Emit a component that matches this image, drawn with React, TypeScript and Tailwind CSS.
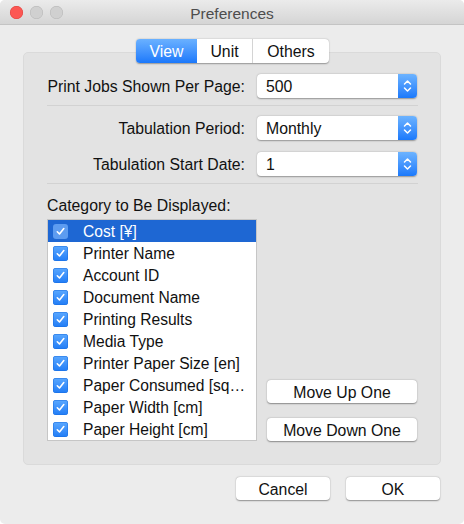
import React from "react";

const font = { fontFamily: '"Liberation Sans", Arial, sans-serif' };

function Check({ selected }: { selected?: boolean }) {
  return (
    <div
      className={
        "flex h-[15px] w-[15px] items-center justify-center rounded-[3px] " +
        (selected
          ? "bg-[#5d9cf0]"
          : "bg-gradient-to-b from-[#5aa8ff] to-[#1f7cf6] shadow-[inset_0_0_0_0.5px_#1a6fe0]")
      }
    >
      <svg width="11" height="11" viewBox="0 0 11 11" fill="none">
        <path d="M2.3 5.8 L4.5 8 L8.8 2.6" stroke="white" strokeWidth="1.6" strokeLinecap="round" strokeLinejoin="round" />
      </svg>
    </div>
  );
}

function Popup({ value }: { value: string }) {
  return (
    <div className="flex h-[24px] w-[160px] overflow-hidden rounded-[4px] bg-white shadow-[0_0.5px_1.5px_rgba(0,0,0,0.35)]">
      <div className="flex flex-1 items-center pl-[9px] pt-[2px] text-[15.8px] text-[#111]">{value}</div>
      <div className="flex w-[19px] items-center justify-center bg-gradient-to-b from-[#6cb3ff] to-[#1a79fb]">
        <svg width="9" height="14" viewBox="0 0 9 14" fill="none">
          <path d="M1.5 5 L4.5 2 L7.5 5" stroke="white" strokeWidth="1.5" strokeLinecap="round" strokeLinejoin="round" />
          <path d="M1.5 9 L4.5 12 L7.5 9" stroke="white" strokeWidth="1.5" strokeLinecap="round" strokeLinejoin="round" />
        </svg>
      </div>
    </div>
  );
}

function Button({ label, w }: { label: string; w: string }) {
  return (
    <div
      className={
        "flex h-[23px] items-center justify-center rounded-[4px] bg-white pt-[2px] text-[15.8px] text-[#111] shadow-[0_0.5px_1.5px_rgba(0,0,0,0.4)] " +
        w
      }
    >
      {label}
    </div>
  );
}

function Row({ label, value, mt }: { label: string; value: string; mt: string }) {
  return (
    <div className={"flex h-[24px] items-center " + mt}>
      <div className="flex h-[24px] w-[198px] items-center justify-end whitespace-nowrap pt-[2px] text-[15.8px]">{label}</div>
      <div className="ml-[12px]">
        <Popup value={value} />
      </div>
    </div>
  );
}

const items = [
  "Cost [¥]",
  "Printer Name",
  "Account ID",
  "Document Name",
  "Printing Results",
  "Media Type",
  "Printer Paper Size [en]",
  "Paper Consumed [sq…",
  "Paper Width [cm]",
  "Paper Height [cm]",
];

export default function App() {
  return (
    <div style={font} className="h-[524px] w-[464px] overflow-hidden rounded-[5px] bg-[#ececec] text-[#111]">
      {/* Title bar */}
      <div className="relative flex h-[25px] items-center border-b border-[#c4c4c4] bg-gradient-to-b from-[#ebebeb] to-[#d5d5d5]">
        <div className="flex gap-[7px] pl-[10px]">
          <div className="h-[13px] w-[13px] rounded-full bg-[#fc5753] shadow-[inset_0_0_0_0.5px_#de3e3a]" />
          <div className="h-[13px] w-[13px] rounded-full bg-[#d0d0d0] shadow-[inset_0_0_0_0.5px_#b6b6b6]" />
          <div className="h-[13px] w-[13px] rounded-full bg-[#d0d0d0] shadow-[inset_0_0_0_0.5px_#b6b6b6]" />
        </div>
        <div className="absolute inset-x-0 top-0 flex h-[25px] items-center justify-center pt-[2px] text-[15.5px] text-[#4d4d4d]">
          Preferences
        </div>
      </div>

      {/* Tabs */}
      <div className="relative z-10 mt-[14px] flex justify-center">
        <div className="ml-[1px] flex h-[24px] overflow-hidden rounded-[4px] bg-white text-[15.8px] shadow-[0_0.5px_1.5px_rgba(0,0,0,0.35)]">
          <div className="flex w-[61px] items-center justify-center bg-gradient-to-b from-[#6ab1ff] to-[#1a78fb] pt-[2px] text-white">View</div>
          <div className="flex w-[56px] items-center justify-center border-r border-[#d4d4d4] pt-[2px]">Unit</div>
          <div className="flex w-[76px] items-center justify-center pt-[2px]">Others</div>
        </div>
      </div>

      {/* Panel */}
      <div className="mx-[23px] mt-[-11px] h-[413px] rounded-[5px] border border-[#dadada] bg-[#e3e3e3] pl-[23px] pr-[22px] pt-[21px]">
        <Row label="Print Jobs Shown Per Page:" value="500" mt="" />
        <div className="mt-[7px] h-[1px] bg-[#d2d2d2]" />
        <Row label="Tabulation Period:" value="Monthly" mt="mt-[10px]" />
        <Row label="Tabulation Start Date:" value="1" mt="mt-[12px]" />
        <div className="mt-[7px] h-[1px] bg-[#d2d2d2]" />
        <div className="mt-[12px] h-[18px] pt-[1px] text-[15.8px] leading-[18px]">Category to Be Displayed:</div>
        <div className="mt-[5px] flex items-end">
          <div className="h-[222px] w-[210px] border border-[#c6c6c6] bg-white">
            {items.map((t, i) => (
              <div
                key={t}
                className={
                  "flex h-[22px] items-center text-[15.6px] " +
                  (i === 0 ? "bg-[#1e67d3] text-white" : "")
                }
              >
                <div className="ml-[5px] mr-[15px]">
                  <Check selected={i === 0} />
                </div>
                <span className="whitespace-nowrap pt-[2px]">{t}</span>
              </div>
            ))}
          </div>
          <div className="ml-[10px] flex flex-col gap-[15px]">
            <Button label="Move Up One" w="w-[150px]" />
            <Button label="Move Down One" w="w-[150px]" />
          </div>
        </div>
      </div>

      {/* Bottom buttons */}
      <div className="mt-[12px] flex justify-end gap-[16px] pr-[24px]">
        <Button label="Cancel" w="w-[94px]" />
        <Button label="OK" w="w-[94px]" />
      </div>
    </div>
  );
}
